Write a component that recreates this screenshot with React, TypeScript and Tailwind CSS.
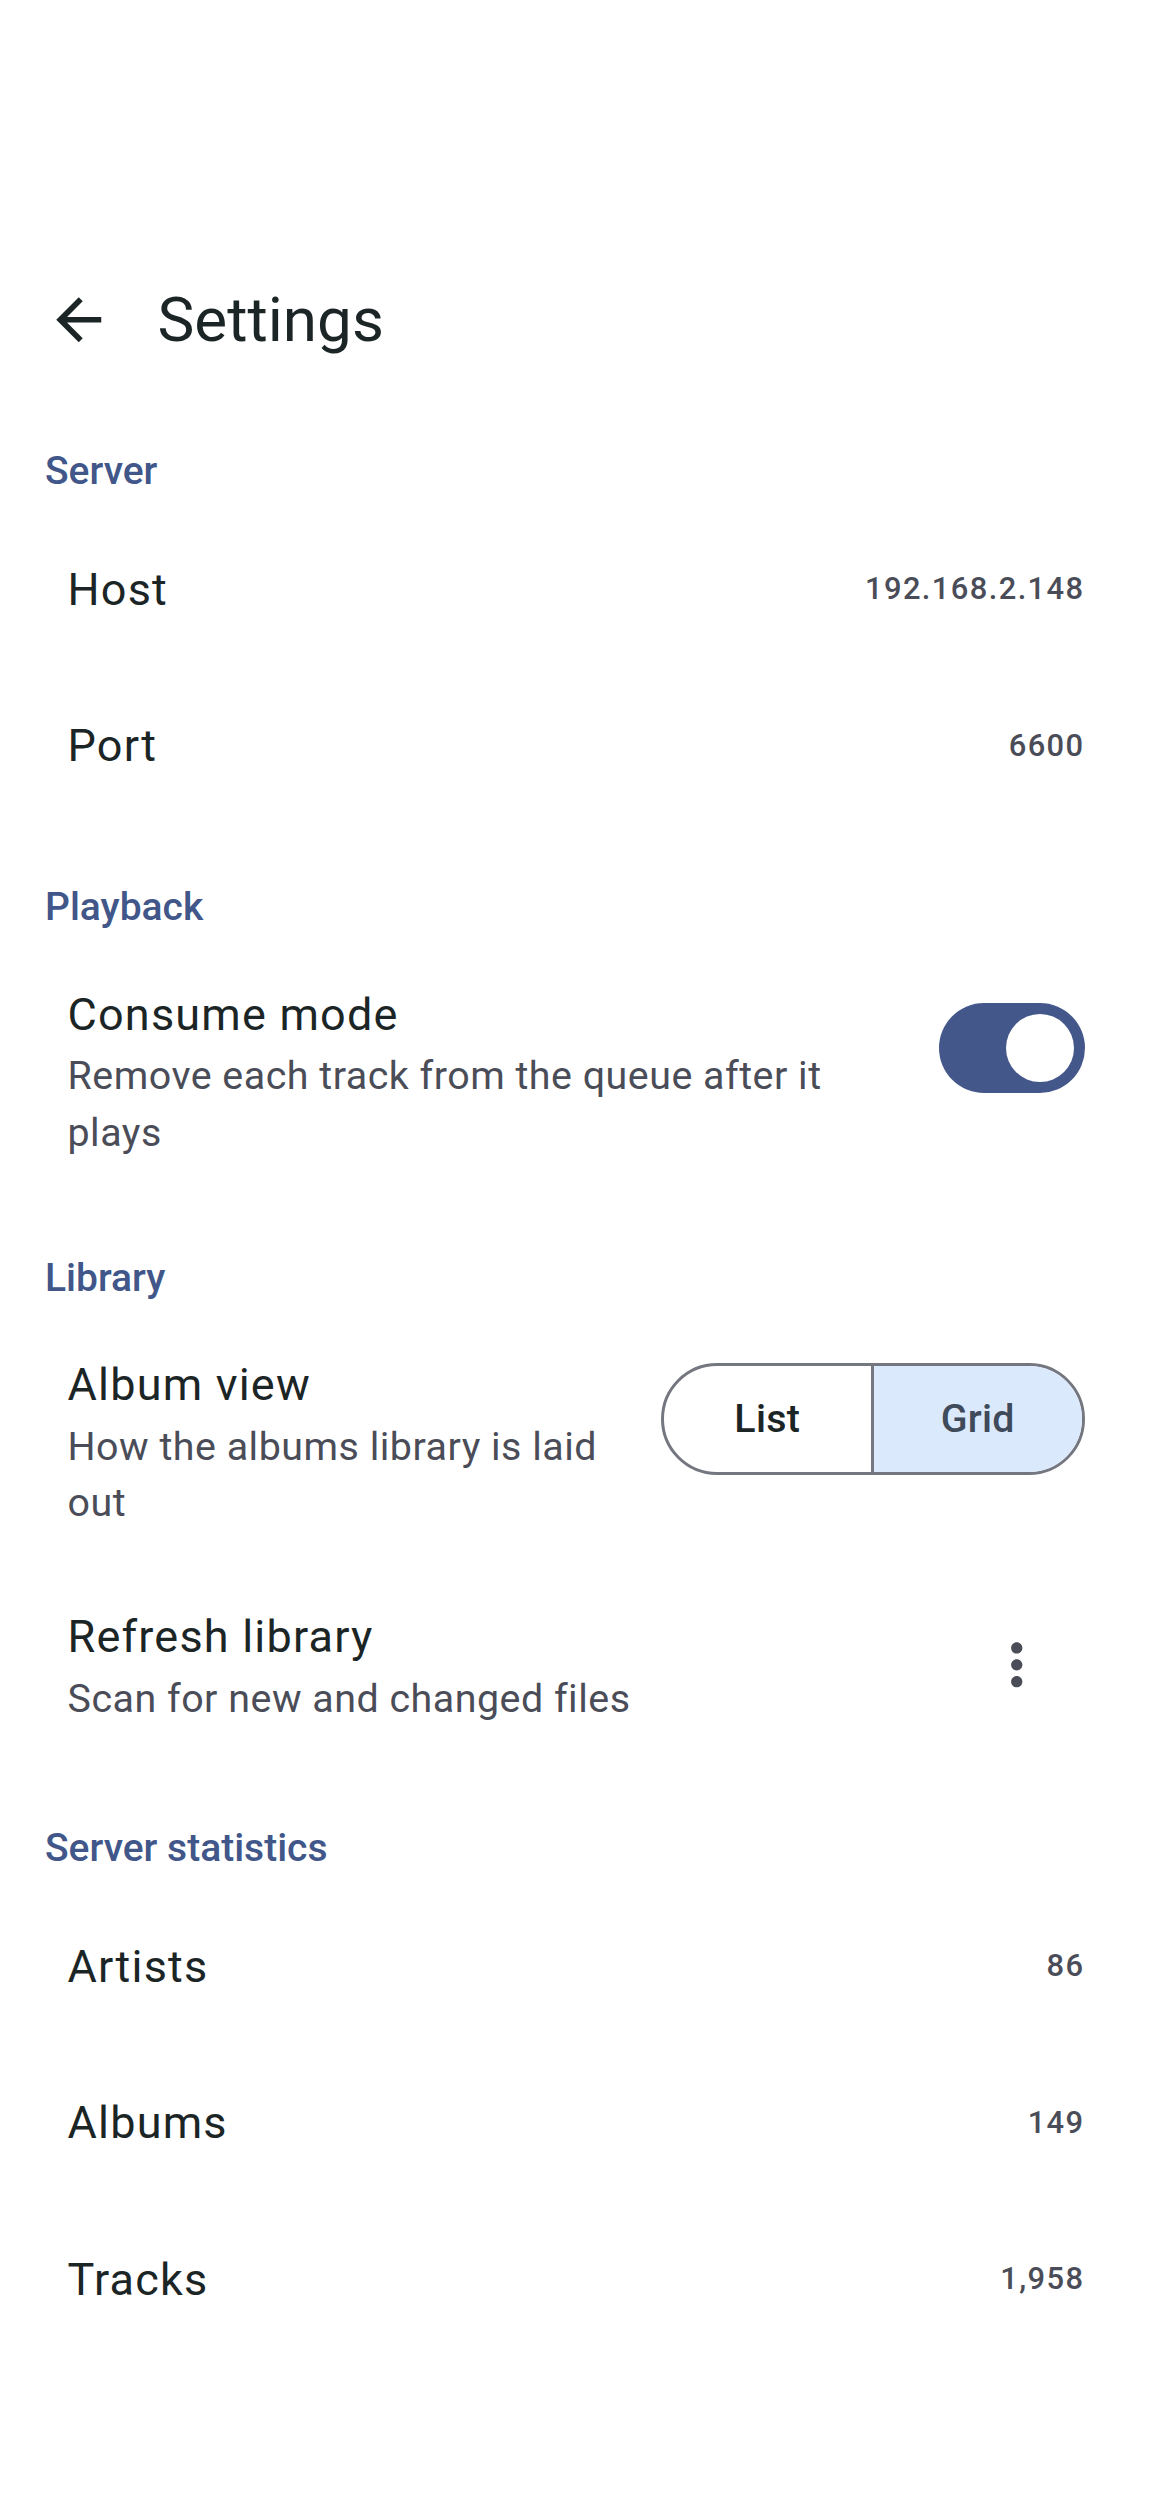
import React from "react";

function SectionHeader({ children, first }: { children: React.ReactNode; first?: boolean }) {
  return (
    <div
      className={
        first
          ? "pt-[33px] pb-[12px] pl-[45px] text-[39px] leading-[56px] font-medium tracking-[0px] text-[#415689]"
          : "pt-[55px] pb-[12px] pl-[45px] text-[39px] leading-[56px] font-medium tracking-[0px] text-[#415689]"
      }
    >
      {children}
    </div>
  );
}

function ValueRow({ label, value }: { label: string; value: string }) {
  return (
    <div className="h-[156.5px] px-[67.5px] flex items-center justify-between">
      <span className="text-[45px] leading-[67.5px] tracking-[1.2px] text-[#1c2526]">{label}</span>
      <span className="text-[30.9px] leading-[44px] tracking-[1.4px] font-medium text-[#4a4d58]">{value}</span>
    </div>
  );
}

function Switch() {
  return (
    <div className="h-[135px] flex items-center">
      <div className="w-[146px] h-[90px] rounded-full bg-[#44578a] flex items-center justify-end pr-[11px]">
        <div className="w-[68px] h-[68px] rounded-full bg-white" />
      </div>
    </div>
  );
}

function Segmented() {
  return (
    <div className="h-[135px] flex items-center">
      <div className="w-[424px] h-[112px] rounded-full border-[3px] border-[#74777f] flex overflow-hidden">
        <div className="flex-1 flex items-center justify-center text-[39.4px] font-medium tracking-[0.28px] text-[#1c2526] border-r-[3px] border-[#74777f]">
          List
        </div>
        <div className="flex-1 flex items-center justify-center text-[39.4px] font-medium tracking-[0.28px] text-[#3f4a5a] bg-[#dbe9fd]">
          Grid
        </div>
      </div>
    </div>
  );
}

export default function App() {
  return (
    <div
      className="min-h-[2496px] w-full bg-white text-[#1c2526]"
      style={{ fontFamily: "Roboto, 'Noto Sans', Arial, sans-serif" }}
    >
      {/* Top app bar */}
      <div className="pt-[230px]">
        <div className="h-[180px] flex items-center pl-[45px]">
          <svg viewBox="0 0 24 24" className="w-[67.5px] h-[67.5px]" fill="#1c2526">
            <path d="M20 11H7.83l5.59-5.59L12 4l-8 8 8 8 1.41-1.41L7.83 13H20v-2z" />
          </svg>
          <div className="ml-[45px] text-[62px] leading-[80px] text-[#1c2526]">Settings</div>
        </div>
      </div>

      {/* Server */}
      <SectionHeader first>Server</SectionHeader>
      <ValueRow label="Host" value="192.168.2.148" />
      <ValueRow label="Port" value="6600" />

      {/* Playback */}
      <SectionHeader>Playback</SectionHeader>
      <div className="flex items-start px-[67.5px] pt-[33.75px] pb-[33.75px] gap-[45px]">
        <div className="flex-1 min-w-0">
          <div className="text-[45px] leading-[67.5px] tracking-[1.2px] text-[#1c2526]">Consume mode</div>
          <div className="text-[39.4px] leading-[56.25px] tracking-[0.5px] text-[#4a4d58]">
            Remove each track from the queue after it plays
          </div>
        </div>
        <Switch />
      </div>

      {/* Library */}
      <SectionHeader>Library</SectionHeader>
      <div className="flex items-start px-[67.5px] pt-[33.75px] pb-[33.75px] gap-[45px]">
        <div className="flex-1 min-w-0">
          <div className="text-[45px] leading-[67.5px] tracking-[1.2px] text-[#1c2526]">Album view</div>
          <div className="text-[39.4px] leading-[56.25px] tracking-[0.5px] text-[#4a4d58]">
            How the albums library is laid out
          </div>
        </div>
        <Segmented />
      </div>
      <div className="min-h-[200px] flex items-center px-[67.5px] gap-[45px]">
        <div className="flex-1 min-w-0">
          <div className="text-[45px] leading-[67.5px] tracking-[1.2px] text-[#1c2526]">Refresh library</div>
          <div className="text-[39.4px] leading-[56.25px] tracking-[0.5px] text-[#4a4d58]">
            Scan for new and changed files
          </div>
        </div>
        <div className="w-[135px] h-[135px] flex items-center justify-center">
          <svg viewBox="0 0 24 24" className="w-[67.5px] h-[67.5px]" fill="#4a4d58">
            <path d="M12 8c1.1 0 2-.9 2-2s-.9-2-2-2-2 .9-2 2 .9 2 2 2zm0 2c-1.1 0-2 .9-2 2s.9 2 2 2 2-.9 2-2-.9-2-2-2zm0 6c-1.1 0-2 .9-2 2s.9 2 2 2 2-.9 2-2-.9-2-2-2z" />
          </svg>
        </div>
      </div>

      {/* Server statistics */}
      <SectionHeader>Server statistics</SectionHeader>
      <ValueRow label="Artists" value="86" />
      <ValueRow label="Albums" value="149" />
      <ValueRow label="Tracks" value="1,958" />
    </div>
  );
}
